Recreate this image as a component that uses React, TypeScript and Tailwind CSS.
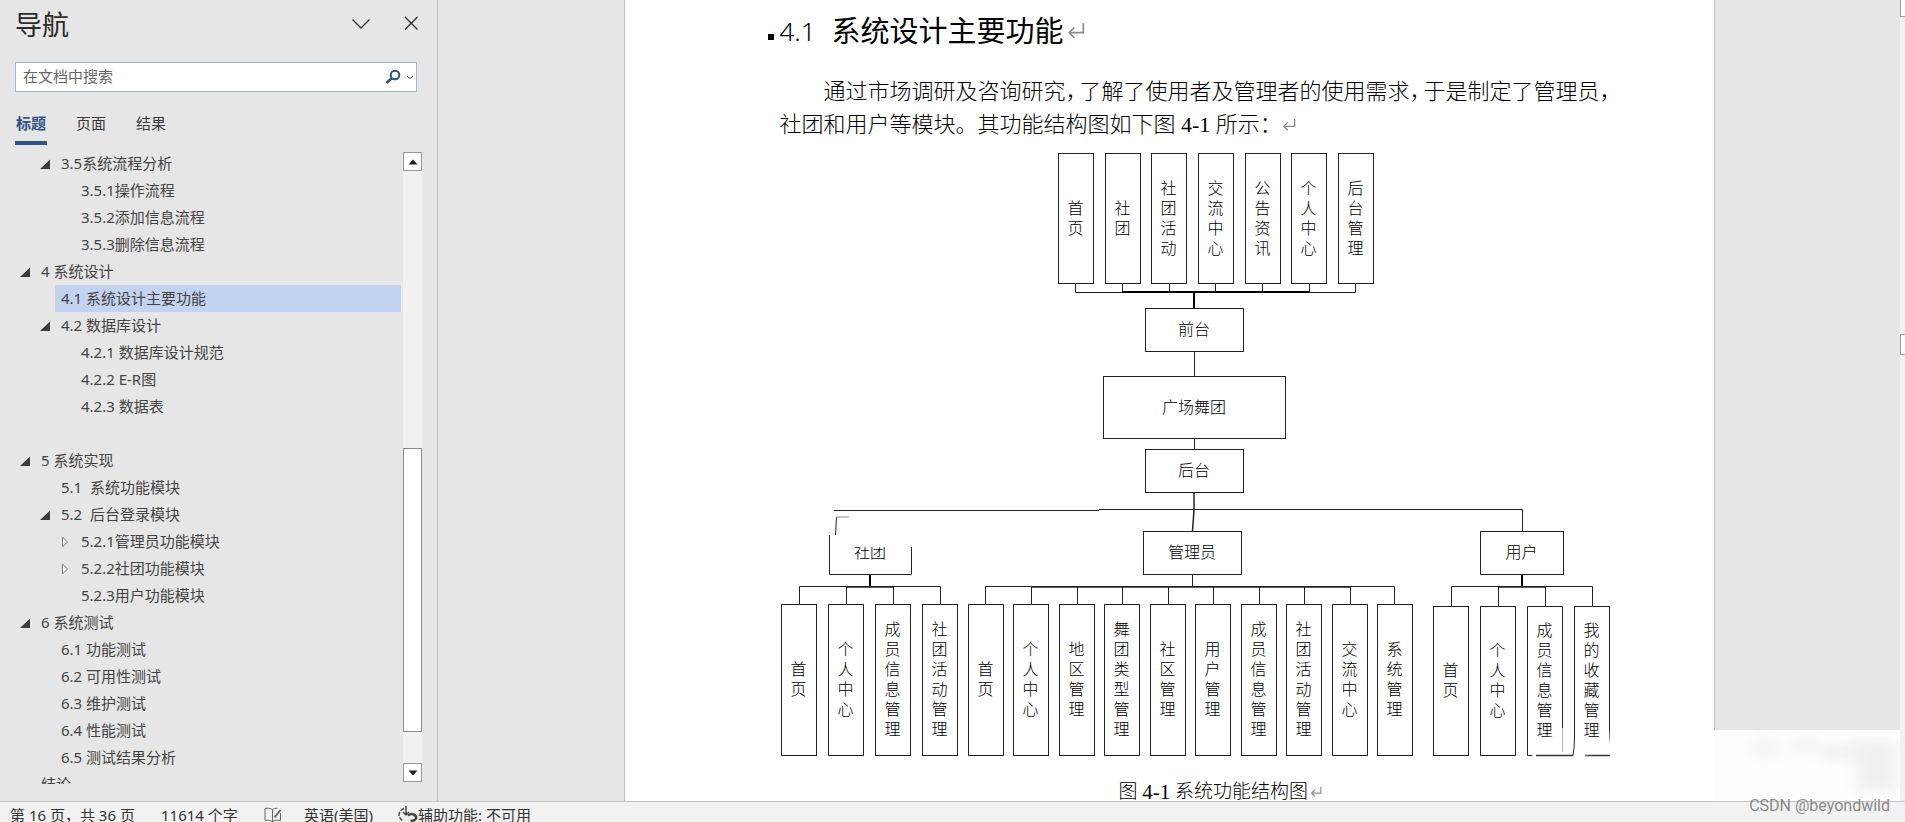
import React from "react";

type TreeItem = {
  label: string;
  level: 1 | 2 | 3;
  state?: "open" | "closed";
  selected?: boolean;
};

const tree: TreeItem[] = [
  { label: "3.5系统流程分析", level: 2, state: "open" },
  { label: "3.5.1操作流程", level: 3 },
  { label: "3.5.2添加信息流程", level: 3 },
  { label: "3.5.3删除信息流程", level: 3 },
  { label: "4 系统设计", level: 1, state: "open" },
  { label: "4.1 系统设计主要功能", level: 2, selected: true },
  { label: "4.2 数据库设计", level: 2, state: "open" },
  { label: "4.2.1 数据库设计规范", level: 3 },
  { label: "4.2.2 E-R图", level: 3 },
  { label: "4.2.3 数据表", level: 3 },
  { label: "", level: 3 },
  { label: "5 系统实现", level: 1, state: "open" },
  { label: "5.1  系统功能模块", level: 2 },
  { label: "5.2  后台登录模块", level: 2, state: "open" },
  { label: "5.2.1管理员功能模块", level: 3, state: "closed" },
  { label: "5.2.2社团功能模块", level: 3, state: "closed" },
  { label: "5.2.3用户功能模块", level: 3 },
  { label: "6 系统测试", level: 1, state: "open" },
  { label: "6.1 功能测试", level: 2 },
  { label: "6.2 可用性测试", level: 2 },
  { label: "6.3 维护测试", level: 2 },
  { label: "6.4 性能测试", level: 2 },
  { label: "6.5 测试结果分析", level: 2 },
  { label: "结论", level: 1 },
];

const indent = { 1: "pl-[15px]", 2: "pl-[35px]", 3: "pl-[55px]" };

function Marker({ state }: { state?: "open" | "closed" }) {
  return (
    <svg viewBox="0 0 20 12" className="h-3 w-5 shrink-0" aria-hidden="true">
      {state === "open" && <path d="M15 1.5V11H5z" fill="#3c3c3c" />}
      {state === "closed" && (
        <path d="M7.500 1v10l5-5z" fill="#fff" stroke="#777" strokeWidth="1" />
      )}
    </svg>
  );
}

function TreeRow({ item }: { item: TreeItem }) {
  if (!item.label) return <li className="h-[27px]" />;
  return (
    <li className={`flex h-[27px] items-center ${indent[item.level]}`}>
      <Marker state={item.state} />
      <button
        type="button"
        className={`h-[27px] min-w-0 flex-1 whitespace-pre pl-[6px] text-left text-[15px] leading-[27px] text-[#444] ${
          item.selected ? "bg-[#c2d3f0]" : ""
        }`}
      >
        {item.label}
      </button>
    </li>
  );
}

function Sidebar() {
  return (
    <aside className="flex w-[438px] shrink-0 flex-col border-r border-[#bcbcbc] pl-[15px]">
      <header className="flex h-[62px] items-start justify-between pr-3">
        <h1 className="pt-1 text-[27px] leading-[42px] text-[#2b2b2b]">导航</h1>
        <div className="flex gap-[28px] pt-3">
          <button type="button" aria-label="选项">
            <svg viewBox="0 0 24 24" className="size-6" fill="none" stroke="#333" strokeWidth="1.300">
              <path d="M3.500 7.500l8.500 8.500 8.500-8.500" />
            </svg>
          </button>
          <button type="button" aria-label="关闭">
            <svg viewBox="0 0 24 24" className="size-6" fill="none" stroke="#333" strokeWidth="1.400">
              <path d="M4 5l12.500 12.500M16.500 5L4 17.500" />
            </svg>
          </button>
        </div>
      </header>
      <div className="mr-5 flex h-[30px] items-center border border-[#a3b8cc] bg-white pl-[7px]">
        <input
          type="text"
          aria-label="在文档中搜索"
          placeholder="在文档中搜索"
          className="min-w-0 flex-1 bg-transparent pb-0.5 text-[15px] leading-6 outline-none placeholder:text-[#666] placeholder:opacity-100"
        />
        <button type="button" aria-label="搜索">
          <svg viewBox="0 0 16 16" className="size-4" fill="none" stroke="#2f5288">
            <circle cx="10" cy="6" r="4.300" strokeWidth="2" />
            <path d="M7 9l-5.500 5" strokeWidth="2.600" />
          </svg>
        </button>
        <button type="button" aria-label="搜索选项" className="pl-[5px] pr-0.5">
          <svg viewBox="0 0 8 8" className="size-2" fill="none" stroke="#444">
            <path d="M1 3l3 2.500L7 3" />
          </svg>
        </button>
      </div>
      <div role="tablist" className="flex h-[58px] gap-[28px] pt-[19px]">
        <button role="tab" aria-selected="true" type="button" className="flex h-[34px] w-8 flex-col justify-between text-[15px] font-bold leading-6 text-[#2f5288]">
          <span className="w-8 text-center">标题</span>
          <span className="h-1 w-8 bg-[#2f5288]" />
        </button>
        <button role="tab" aria-selected="false" type="button" className="h-6 w-8 text-[15px] leading-6 text-[#3b3b3b]">
          页面
        </button>
        <button role="tab" aria-selected="false" type="button" className="h-6 w-8 text-[15px] leading-6 text-[#3b3b3b]">
          结果
        </button>
      </div>
      <div className="mb-[17px] flex min-h-0 flex-1 pr-[15px]">
        <nav aria-label="文档标题" className="-ml-[15px] mr-0.5 min-w-0 flex-1 overflow-hidden">
          <ul>
            {tree.map((item, i) => (
              <TreeRow key={i} item={item} />
            ))}
          </ul>
        </nav>
        <div className="mb-0.5 mt-0.5 flex w-[19px] flex-col bg-[#f1f1f1]">
          <button type="button" aria-label="向上滚动" className="flex h-[19px] items-center justify-center border border-[#999] bg-white">
            <svg viewBox="0 0 10 6" className="h-[6px] w-[10px]">
              <path d="M5 0.500l4.500 5h-9z" fill="#222" />
            </svg>
          </button>
          <div className="flex-[278]" />
          <div className="flex-[284] border border-[#8c8c8c] bg-white" />
          <div className="flex-[31]" />
          <button type="button" aria-label="向下滚动" className="flex h-[19px] items-center justify-center border border-[#999] bg-white">
            <svg viewBox="0 0 10 6" className="h-[6px] w-[10px]">
              <path d="M5 5.500l4.500-5h-9z" fill="#222" />
            </svg>
          </button>
        </div>
      </div>
    </aside>
  );
}

type Node = { text: string; x: number; y: number; w: number; h: number; open?: boolean };

const column = (texts: string[], xs: number[], y: number, h: number): Node[] =>
  texts.map((text, i) => ({ text, x: xs[i], y, w: 36, h }));

const columns: Node[] = [
  ...column(
    ["首页", "社团", "社团活动", "交流中心", "公告资讯", "个人中心", "后台管理"],
    [278, 325, 371, 418, 465, 511, 558],
    3,
    131
  ),
  ...column(["首页", "个人中心", "成员信息管理", "社团活动管理"], [1, 48, 95, 142], 454, 152),
  ...column(
    ["首页", "个人中心", "地区管理", "舞团类型管理", "社区管理", "用户管理", "成员信息管理", "社团活动管理", "交流中心", "系统管理"],
    [188, 233, 279, 324, 370, 415, 461, 506, 552, 597],
    454,
    152
  ),
  ...column(["首页", "个人中心"], [653, 700], 456, 150),
  ...column(["成员信息管理", "我的收藏管理"], [747, 794], 456, 150).map((n) => ({ ...n, open: true })),
];

const boxes: Node[] = [
  { text: "前台", x: 365, y: 158, w: 99, h: 44 },
  { text: "广场舞团", x: 323, y: 226, w: 183, h: 63 },
  { text: "后台", x: 365, y: 299, w: 99, h: 44 },
  { text: "管理员", x: 363, y: 381, w: 99, h: 44 },
  { text: "用户", x: 700, y: 381, w: 84, h: 44 },
  { text: "社团", x: 49, y: 381, w: 83, h: 44, open: true },
];

function Diagram() {
  return (
    <figure className="relative h-[624px] w-[830px] text-base font-light leading-5 text-black">
      <svg viewBox="0 0 830 624" className="absolute inset-0 size-full" fill="none" stroke="#222">
        <path d="M295.500 134v8.500h280V134M342.500 134v8M389.500 134v8M435.500 134v8M482.500 134v8M529.500 134v8M414.500 202v24M414.500 289v10" />
        <path d="M342 142h187M414 142v16" strokeWidth="2" stroke="#000" />
        <path d="M54 360.500h265M319 359.500h423.500V381" />
        <path d="M414 343v17L412.500 381" strokeWidth="1.500" />
        <path d="M55.500 385L56.500 367" />
        <path d="M56 367h13" stroke="#888" />
        <path d="M49.500 385v39.500h82V397" />
        <path d="M19.500 454v-17.500h141V454M66.500 437v17M113.500 437v17" />
        <path d="M90 425v12" strokeWidth="2" stroke="#000" />
        <path d="M66 437h47" strokeWidth="1.500" />
        <path d="M205.500 454v-17.500h409V454M251.500 437v17M297.500 437v17M342.500 437v17M388.500 437v17M433.500 437v17M479.500 437v17M524.500 437v17M570.500 437v17M412.500 425v11" />
        <path d="M251 437h319" strokeWidth="1.500" />
        <path d="M671.500 456v-19.500h141V456M718.500 437v19M765.500 437v19" />
        <path d="M742 425v12" strokeWidth="2" stroke="#000" />
        <path d="M718 437h47" strokeWidth="1.500" />
        <path d="M752 605.500h-4.500v-149h35V578M794.500 456v130q0 12-1.500 19.500M794 456.500h35.500V578q0 14 3 27.500" />
        <path d="M782.500 578v24" stroke="#b5b5bd" />
        <path d="M756 605.500h37M805 605.500h27.500" stroke="#334" strokeWidth="1.500" />
      </svg>
      {columns.map((n, i) => (
        <div
          key={i}
          className={`absolute flex items-center justify-center pb-0.5 ${n.open ? "" : "border border-[#222]"}`}
          style={{ left: n.x, top: n.y, width: n.w, height: n.h }}
        >
          <span className="w-4 break-all">{n.text}</span>
        </div>
      ))}
      {boxes.map((n) => (
        <div
          key={n.text}
          className={`absolute flex items-center justify-center pb-0.5 ${n.open ? "" : "border border-[#222]"}`}
          style={{ left: n.x, top: n.y, width: n.w, height: n.h }}
        >
          {n.text}
        </div>
      ))}
      <div className="absolute left-[52px] top-[386px] h-[11px] w-[84px] bg-white" />
      <div className="absolute left-[768px] top-[586px] h-3 w-3 rounded-full bg-white/60 blur-[2px]" />
      <div className="absolute left-[797px] top-[596px] h-2 w-3 rounded-full bg-white blur-[2px]" />
    </figure>
  );
}

function ReturnMark({ className }: { className: string }) {
  return (
    <svg viewBox="0 0 16 16" className={className} fill="none" stroke="#8c8c8c" strokeWidth="1.500" aria-hidden="true">
      <path d="M14.500 1v8.500H2M6.500 5L2 9.500 6.500 14" />
    </svg>
  );
}

function Comma() {
  return <span className="pr-[3px] [font-feature-settings:'halt']">，</span>;
}

function DocumentPage() {
  return (
    <article className="h-full w-[1091px] overflow-hidden border-x border-[#c3c3c3] bg-white pl-[155px] text-black">
      <h2 className="-ml-[12px] flex items-center whitespace-pre pt-[9px] text-[29px] leading-[44px]">
        <span className="mr-[6px] mt-3 size-[6px] bg-black" />
        <span className="w-[52px] text-[26px] font-light">4.1</span>
        <span>系统设计主要功能</span>
        <ReturnMark className="ml-[3px] size-[18px]" />
      </h2>
      <p className="mt-[22px] whitespace-nowrap font-['Liberation_Serif','Noto_Sans_CJK_SC',serif] text-[22px] font-light leading-[33px]">
        <span className="block pl-11">
          通过市场调研及咨询研究<Comma />了解了使用者及管理者的使用需求<Comma />于是制定了管理员，
        </span>
        <span className="flex items-center whitespace-pre">
          社团和用户等模块。其功能结构图如下图 <span className="font-normal">4-1</span> 所示：
          <ReturnMark className="size-[14px]" />
        </span>
      </p>
      <div className="mt-[9px]">
        <Diagram />
      </div>
      <p className="flex items-center whitespace-pre pl-[339px] font-['Liberation_Serif','Noto_Sans_CJK_SC',serif] text-[19px] font-light leading-9">
        图 <span className="text-[21px] font-normal">4-1</span> 系统功能结构图
        <ReturnMark className="ml-0.5 size-3" />
      </p>
    </article>
  );
}

function StatusBar() {
  return (
    <footer className="relative flex h-[21px] shrink-0 items-start whitespace-pre border-t border-[#c3c3c3] bg-[#f2f2f2] pl-[10px] text-[15px] text-[#333]">
      <div className="flex h-[26px] items-center leading-[26px]">
        <span className="w-[151px]">第 16 页，共 36 页</span>
        <span className="w-[103px]">11614 个字</span>
        <svg viewBox="0 0 18 16" className="mr-[22px] h-4 w-[18px]" fill="none" stroke="#666">
          <path d="M8.500 2.500C6 1 3.500 1 1 1.500v12c2.500-.5 5-.5 7.500 1zM8.500 2.500c1.500-1 3-1.300 5-1.200M8.500 14.500c2.500-1.500 5-1.500 8-1V6" />
          <path d="M10.500 10.500L16.500 3" strokeWidth="2" />
        </svg>
        <span className="w-[94px]">英语(美国)</span>
        <svg viewBox="0 0 20 20" className="h-5 w-5" fill="none" stroke="#444">
          <path d="M6 3.500a6.500 6.500 0 0 0-1.500 12" strokeWidth="1.500" strokeDasharray="4 1.500" />
          <path d="M8 1v8M5 7l3 3 3-3" strokeWidth="1.500" />
          <path d="M10 10.500q4-3 7 0t-1.500 5l-3 .5" strokeWidth="2.600" />
        </svg>
        <span>辅助功能: 不可用</span>
      </div>
    </footer>
  );
}

export default function App() {
  return (
    <div className="relative flex h-screen flex-col overflow-hidden bg-[#e6e6e6] font-['Noto_Sans','Noto_Sans_CJK_SC',sans-serif]">
      <div className="flex min-h-0 flex-1">
        <Sidebar />
        <main className="relative flex min-w-0 flex-1 justify-center">
          <DocumentPage />
          <div className="absolute bottom-0 right-0 h-[71px] w-[186px] overflow-hidden bg-[#fdfdfd]">
            <div className="absolute left-9 top-2 h-5 w-8 rounded-full bg-[#f5f5f5] blur-[5px]" />
            <div className="absolute left-[76px] top-2 h-4 w-8 rounded-full bg-[#f5f5f5] blur-[5px]" />
            <div className="absolute left-[106px] top-3 h-5 w-12 rounded-full bg-[#f3f3f3] blur-[5px]" />
            <div className="absolute left-[142px] top-3 h-12 w-10 bg-[#f0f0f0] blur-[6px]" />
          </div>
        </main>
        <div className="flex w-[5px] shrink-0 flex-col bg-[#f1f1f1]">
          <div className="h-[17px] border-b border-l border-[#999] bg-white" />
          <div className="mt-[317px] h-[21px] border-y border-l border-[#999] bg-white" />
        </div>
      </div>
      <StatusBar />
      <div className="absolute bottom-[4px] right-[15px] font-[Roboto,sans-serif] text-base leading-6 text-[#8a8a8a]">
        CSDN @beyondwild
      </div>
    </div>
  );
}
